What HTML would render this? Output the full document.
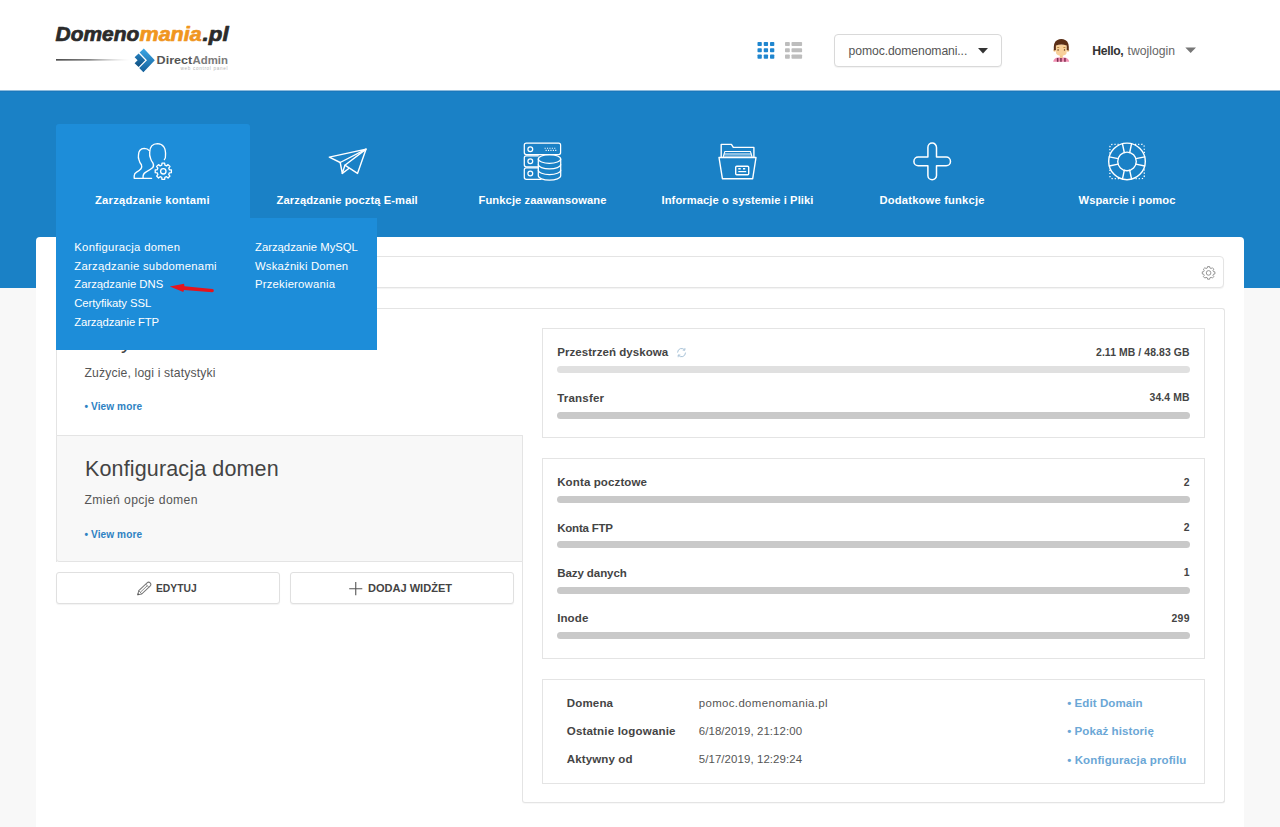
<!DOCTYPE html>
<html lang="pl"><head><meta charset="utf-8"><title>DirectAdmin</title>
<style>
html,body{margin:0;padding:0}
body{width:1280px;height:827px;position:relative;overflow:hidden;background:#f8f8f8;font-family:"Liberation Sans",sans-serif}
.a{position:absolute;box-sizing:border-box}
.t{position:absolute;white-space:pre;line-height:1;font-family:"Liberation Sans",sans-serif}
svg{position:absolute;overflow:visible}
.bar{position:absolute;left:557px;width:632.5px;height:7px;border-radius:4px;background:#c9c9c9}
.box{position:absolute;box-sizing:border-box;border:1px solid #e4e4e4;background:#fff}

</style></head>
<body>
<!-- header -->
<div class="a" style="left:0;top:0;width:1280px;height:90px;background:#fff"></div>
<!-- blue nav -->
<div class="a" style="left:0;top:90px;width:1280px;height:198px;background:#1a81c6"></div>
<div class="a" style="left:0;top:90px;width:1280px;height:1px;background:#8dbbdc"></div>
<div class="a" style="left:0;top:91px;width:1280px;height:1px;background:#1b78bc"></div>
<!-- main white panel -->
<div class="a" style="left:36px;top:237px;width:1208px;height:600px;background:#fff;border-radius:4px 4px 0 0"></div>
<!-- search box -->
<div class="box" style="left:56px;top:256px;width:1168px;height:32px;border-radius:4px;box-shadow:0 1px 1px rgba(0,0,0,.05)"></div>
<!-- outer container (top/left/right borders) -->
<div class="a" style="left:55.5px;top:307.5px;width:1169px;height:495px;border:1px solid #e4e4e4;border-bottom:none;border-radius:3px 3px 3px 0;background:#fff"></div>
<!-- white cover below left column so that left border stops at 562 -->
<div class="a" style="left:50px;top:562px;width:471.5px;height:245px;background:#fff"></div>
<!-- right container left+bottom border -->
<div class="a" style="left:521.5px;top:435px;width:703px;height:367.5px;border:1px solid #e4e4e4;border-top:none;border-radius:0 0 3px 3px;box-shadow:0 1px 1px rgba(0,0,0,.03)"></div>
<!-- gray widget -->
<div class="a" style="left:55.5px;top:434.5px;width:467px;height:127.5px;background:#f8f8f8;border:1px solid #e4e4e4;border-radius:0 0 0 3px"></div>
<div class="box" style="left:542px;top:328px;width:662.5px;height:110px"></div>
<div class="box" style="left:542px;top:458px;width:662.5px;height:200.5px"></div>
<div class="box" style="left:542px;top:678.5px;width:662.5px;height:105px"></div>
<!-- bars -->
<div class="bar" style="top:366.2px;background:#e0e0e0"></div>
<div class="bar" style="top:411.5px"></div>
<div class="bar" style="top:496px"></div>
<div class="bar" style="top:541.25px"></div>
<div class="bar" style="top:586.5px"></div>
<div class="bar" style="top:631.75px"></div>
<!-- buttons -->
<div class="box" style="left:55.5px;top:572.3px;width:224px;height:31.4px;border-radius:3px;border-color:#e0e0e0;box-shadow:0 1px 1px rgba(0,0,0,.05)"></div>
<div class="box" style="left:289.5px;top:572.3px;width:224.5px;height:31.4px;border-radius:3px;border-color:#e0e0e0;box-shadow:0 1px 1px rgba(0,0,0,.05)"></div>
<span class="t" style="left:84.50px;top:331.00px;font-size:21.53px;font-weight:400;color:#444;letter-spacing:0.224px;">Zużycie</span>
<!-- active tab + dropdown -->
<div class="a" style="left:55.5px;top:124px;width:194.5px;height:100px;background:#1d8dd9;border-radius:3px 3px 0 0"></div>
<div class="a" style="left:55.5px;top:218px;width:321.5px;height:132px;background:#1d8dd9"></div>
<!-- select -->
<div class="box" style="left:833.5px;top:34px;width:168.5px;height:33px;border-radius:4px;border-color:#d9d9d9;box-shadow:0 1px 1px rgba(0,0,0,.05)"></div>
<svg class="a" style="left:0;top:0" width="1280" height="827" viewBox="0 0 1280 827">
<!-- ===== logo ===== -->
<g font-family="Liberation Sans, sans-serif" font-weight="700" font-style="italic" font-size="19.4" stroke-width="0.7" stroke-linejoin="round">
<text x="55.6" y="40.7" textLength="83.6" lengthAdjust="spacingAndGlyphs" fill="#2b2b2b" stroke="#2b2b2b">Domeno</text>
<text x="139.6" y="40.7" textLength="62" lengthAdjust="spacingAndGlyphs" fill="#f0961f" stroke="#f0961f">mania</text>
<text x="202.6" y="40.7" textLength="26" lengthAdjust="spacingAndGlyphs" fill="#2b2b2b" stroke="#2b2b2b">.pl</text>
</g>
<defs>
<linearGradient id="lg1" x1="0" x2="1" y1="0" y2="0"><stop offset="0" stop-color="#3a3a3a"/><stop offset="0.45" stop-color="#777"/><stop offset="1" stop-color="#ccc" stop-opacity="0"/></linearGradient>
<linearGradient id="cg1" x1="0" x2="0" y1="0" y2="1"><stop offset="0" stop-color="#3ba7e6"/><stop offset="1" stop-color="#15609a"/></linearGradient>
<linearGradient id="cg2" x1="0" x2="0" y1="0" y2="1"><stop offset="0" stop-color="#2480bf"/><stop offset="1" stop-color="#0f4f80"/></linearGradient>
</defs>
<rect x="56" y="59.1" width="74" height="1.5" fill="url(#lg1)"/>
<!-- DA chevrons -->
<path d="M134.6 57.2 L138.6 53.4 L145.2 60.2 L138.6 67 L134.6 63.2 L137.6 60.2 Z" fill="url(#cg2)"/>
<path d="M139.6 52.6 L143.8 48.4 L154.8 60.2 L143.4 72.2 L139.2 68 L147 60.2 Z" fill="url(#cg1)"/>
<g font-family="Liberation Sans, sans-serif" font-weight="700" font-size="11.6">
<text x="156.6" y="64.4" textLength="35.6" lengthAdjust="spacingAndGlyphs" fill="#555">Direct</text>
<text x="192.6" y="64.4" textLength="35.4" lengthAdjust="spacingAndGlyphs" fill="#7a7a7a">Admin</text>
</g>
<text x="180.4" y="70.1" font-family="Liberation Sans, sans-serif" font-size="4.6" textLength="47.2" lengthAdjust="spacing" fill="#b5b5b5">web control panel</text>
<!-- grid icon -->
<g fill="#1f86cf">
<rect x="757.5" y="41.9" width="4.3" height="4.2" rx=".8"/><rect x="763.75" y="41.9" width="4.3" height="4.2" rx=".8"/><rect x="770" y="41.9" width="4.3" height="4.2" rx=".8"/>
<rect x="757.5" y="48.15" width="4.3" height="4.2" rx=".8"/><rect x="763.75" y="48.15" width="4.3" height="4.2" rx=".8"/><rect x="770" y="48.15" width="4.3" height="4.2" rx=".8"/>
<rect x="757.5" y="54.5" width="4.3" height="4.2" rx=".8"/><rect x="763.75" y="54.5" width="4.3" height="4.2" rx=".8"/><rect x="770" y="54.5" width="4.3" height="4.2" rx=".8"/>
</g>
<!-- list icon -->
<g fill="#bdbdbd">
<rect x="785" y="41.9" width="4.8" height="4.2" rx=".8"/><rect x="791.5" y="41.9" width="10.6" height="4.2" rx=".8"/>
<rect x="785" y="48.15" width="4.8" height="4.2" rx=".8"/><rect x="791.5" y="48.15" width="10.6" height="4.2" rx=".8"/>
<rect x="785" y="54.5" width="4.8" height="4.2" rx=".8"/><rect x="791.5" y="54.5" width="10.6" height="4.2" rx=".8"/>
</g>
<!-- select caret -->
<path d="M978 47.9 L988 47.9 L983 53.4 Z" fill="#333"/>
<!-- user caret -->
<path d="M1185.3 47.4 L1196 47.4 L1190.65 53 Z" fill="#777"/>
<!-- avatar -->
<g>
<path d="M1053.2 61.8 Q1053.6 58.2 1057.6 57.4 L1064.8 57.4 Q1068.8 58.2 1069.2 61.8 Z" fill="#f08db0"/>
<rect x="1056.9" y="58" width="1.5" height="3.8" fill="#7a3050"/><rect x="1060.2" y="58" width="1.5" height="3.8" fill="#7a3050"/><rect x="1064.2" y="58" width="1.5" height="3.8" fill="#7a3050"/>
<rect x="1059.8" y="54.5" width="3" height="3.4" fill="#f5c58c"/>
<ellipse cx="1054.6" cy="50.2" rx="1.2" ry="1.6" fill="#f3c98f"/><ellipse cx="1068" cy="50.2" rx="1.2" ry="1.6" fill="#f3c98f"/>
<path d="M1055.9 44.5 H1066.7 V52 Q1066.7 55.8 1061.3 55.8 Q1055.9 55.8 1055.9 52 Z" fill="#f8d09a"/>
<path d="M1053.9 50.5 Q1053.2 42 1057 40.2 Q1061.3 37.6 1065.6 40.2 Q1069.4 42 1068.7 50.5 L1066.7 50 L1066.7 45.4 Q1061.3 43.6 1055.9 45.4 L1055.9 50 Z" fill="#5b2f17"/>
<rect x="1057.2" y="47.2" width="2" height=".8" fill="#a9792f"/><rect x="1063.4" y="47.2" width="2" height=".8" fill="#a9792f"/>
<ellipse cx="1058.1" cy="49.9" rx=".7" ry=".9" fill="#7a5530"/><ellipse cx="1064.5" cy="49.9" rx=".7" ry=".9" fill="#7a5530"/>
</g>
<g stroke="#fff" fill="none" stroke-linecap="round" stroke-linejoin="round" stroke-width="1.35">
<path d="M149.3 150.6 Q147.6 148.3 144.2 148.3 Q138.6 148.6 138.5 155 Q138.1 157.6 138.9 159.6 Q139.6 162.6 141.4 164.8 Q142.3 167 141 168.8 Q139.5 170.6 136.6 172.2 Q134.3 173.6 134.2 175.8 L134.2 178.3 L151.6 178.3"/>
<path d="M164.4 159.6 Q165.7 158.4 165.5 155.4 Q166.2 144 157.4 143.7 Q149.9 143.8 149.7 152.4 Q149.3 155.6 150.6 158.6 Q151.5 161.4 152.8 162.8 Q154.3 165.6 152.8 167.6 Q150.6 169.6 146.6 171.6 Q143.3 173.2 143.1 175.9 L143.1 178.3"/>
<path d="M169.40 169.73 L171.39 169.95 L171.39 172.65 L169.40 172.87 L168.72 174.51 L169.97 176.07 L168.07 177.97 L166.51 176.72 L164.87 177.40 L164.65 179.39 L161.95 179.39 L161.73 177.40 L160.09 176.72 L158.53 177.97 L156.63 176.07 L157.88 174.51 L157.20 172.87 L155.21 172.65 L155.21 169.95 L157.20 169.73 L157.88 168.09 L156.63 166.53 L158.53 164.63 L160.09 165.88 L161.73 165.20 L161.95 163.21 L164.65 163.21 L164.87 165.20 L166.51 165.88 L168.07 164.63 L169.97 166.53 L168.72 168.09 Z" stroke-width="1.3"/>
<circle cx="163.3" cy="171.3" r="2.7" stroke-width="1.3"/>
</g>
<g stroke="#fff" fill="none" stroke-linecap="round" stroke-linejoin="round" stroke-width="1.4">
<path d="M366.1 149.1 L329.3 157.15 L340.2 162.5 Z"/>
<path d="M340.2 162.5 L342.3 173.4 L344.9 165.2"/>
<path d="M342.3 173.4 L348.8 168.5"/>
<path d="M366.1 149.1 L344.9 165.2 L357.5 173.4 Z"/>
</g>
<g stroke="#fff" fill="none" stroke-linecap="round" stroke-linejoin="round" stroke-width="1.25">
<rect x="524.3" y="143.2" width="36.3" height="11.4" rx="2"/>
<circle cx="530.3" cy="149.3" r="2.4"/>
<path d="M544.6 148.3 H556.6 M545.6 150.4 H557.4" stroke-dasharray="1.1 1.3" stroke-linecap="butt" stroke-width="1.1"/>
<path d="M538.3 155.8 H526.3 Q524.3 155.8 524.3 157.8 V164.8 Q524.3 166.8 526.3 166.8 H538.3"/>
<circle cx="530.3" cy="161.3" r="2.4"/>
<path d="M538.3 167.8 H526.3 Q524.3 167.8 524.3 169.8 V177.3 Q524.3 179.3 526.3 179.3 H541"/>
<circle cx="530.3" cy="173.4" r="2.4"/>
<ellipse cx="549.5" cy="159" rx="11.2" ry="4.3"/>
<path d="M538.3 159 V175.8 A11.2 4.3 0 0 0 560.7 175.8 V159"/>
<path d="M538.3 164.6 A11.2 4.3 0 0 0 560.7 164.6"/>
<path d="M538.3 170.2 A11.2 4.3 0 0 0 560.7 170.2"/>
</g>
<g stroke="#fff" fill="none" stroke-linecap="round" stroke-linejoin="round" stroke-width="1.4" stroke-linejoin="miter">
<path d="M721.2 157.2 V144.4 H731.4 L733.3 147.4 H753.9 V157.2"/>
<path d="M723.2 157 L724.9 151.4 H750.4 L752.1 157" stroke-width="1.05"/>
<path d="M724.2 153.9 H751.1" stroke-width="1.05"/><path d="M723.6 156.1 H751.7" stroke-width=".7"/>
<path d="M719 157.5 H756 L752.7 178.7 H722.4 Z"/>
<rect x="735.7" y="166.2" width="13" height="8.6" rx="1"/>
<path d="M738.3 168.7 H740.7 M743 168.7 H745.2" stroke-width="1.5" stroke-linecap="butt"/>
<path d="M738.3 171.6 H746.2" stroke-width="1.2" stroke-linecap="butt"/>
</g>
<path d="M927.9000000000001 157.1 V147.4 A4.3 4.3 0 0 1 936.5 147.4 V157.1 H946.2 A4.3 4.3 0 0 1 946.2 165.70000000000002 H936.5 V175.4 A4.3 4.3 0 0 1 927.9000000000001 175.4 V165.70000000000002 H918.2 A4.3 4.3 0 0 1 918.2 157.1 Z" stroke="#fff" fill="none" stroke-linecap="round" stroke-linejoin="round" stroke-width="1.5"/>
<g stroke="#fff" fill="none" stroke-linecap="round" stroke-linejoin="round" stroke-width="1.4">
<path d="M1109.9 153.4 V147.2 Q1109.9 144.3 1112.9 144.3 H1119 M1135 144.3 H1141.3 Q1144.3 144.3 1144.3 147.2 V153.4 M1144.3 169.4 V175.6 Q1144.3 178.6 1141.3 178.6 H1135 M1119 178.6 H1112.9 Q1109.9 178.6 1109.9 175.6 V169.4" stroke-dasharray="1.2 1.9" stroke-width="1.3" stroke-linecap="butt"/>
<circle cx="1127.0" cy="161.4" r="18.3"/><circle cx="1127.0" cy="161.4" r="9.3"/>
<path d="M1124.28 152.51 L1122.42 143.68"/>
<path d="M1129.72 152.51 L1131.58 143.68"/>
<path d="M1135.89 158.68 L1144.72 156.82"/>
<path d="M1135.89 164.12 L1144.72 165.98"/>
<path d="M1129.72 170.29 L1131.58 179.12"/>
<path d="M1124.28 170.29 L1122.42 179.12"/>
<path d="M1118.11 164.12 L1109.28 165.98"/>
<path d="M1118.11 158.68 L1109.28 156.82"/>
</g>
<path d="M1213.54 271.63 L1214.91 271.85 L1214.91 273.95 L1213.54 274.17 L1212.99 275.50 L1213.81 276.62 L1212.32 278.11 L1211.20 277.29 L1209.87 277.84 L1209.65 279.21 L1207.55 279.21 L1207.33 277.84 L1206.00 277.29 L1204.88 278.11 L1203.39 276.62 L1204.21 275.50 L1203.66 274.17 L1202.29 273.95 L1202.29 271.85 L1203.66 271.63 L1204.21 270.30 L1203.39 269.18 L1204.88 267.69 L1206.00 268.51 L1207.33 267.96 L1207.55 266.59 L1209.65 266.59 L1209.87 267.96 L1211.20 268.51 L1212.32 267.69 L1213.81 269.18 L1212.99 270.30 Z" stroke="#8a8a8a" fill="none" stroke-width="0.9" stroke-linejoin="round"/>
<circle cx="1208.6" cy="272.9" r="2.3" stroke="#8a8a8a" fill="none" stroke-width="0.9"/><!-- refresh icon -->
<g stroke="#a9c3d8" fill="none" stroke-width="1" stroke-linecap="round">
<path d="M677.6 352.2 A4 4 0 0 1 684.6 349.8"/><path d="M685.5 353 A4 4 0 0 1 678.5 355.4"/>
<path d="M684.9 348.4 V350.2 H683.1" stroke-width=".9"/><path d="M678.2 356.8 V355 H680" stroke-width=".9"/>
</g>
<!-- pencil -->
<g transform="translate(137.7 594.8) rotate(-43.5)" stroke="#777" fill="none" stroke-width="1" stroke-linejoin="round">
<path d="M0 0 L3.6 -2.2 H15 A2.2 2.2 0 0 1 15 2.2 H3.6 Z"/>
<path d="M3.6 -2.2 V2.2 M13.2 -2.2 V2.2 M3.6 0 H13.2" stroke-width=".8"/>
<path d="M0 0 L1.2 -.7 V.7 Z" fill="#555" stroke="#555" stroke-width=".5"/>
</g>
<!-- plus -->
<path d="M349.2 588.7 H362.3 M355.75 582.1 V595.3" stroke="#555" stroke-width="1.1" fill="none"/>
<!-- red arrow -->
<path d="M169.8 286.6 L184.1 283.7 L184.4 286.3 L212.4 289.1 A1.55 1.55 0 0 1 212.2 292.2 L184 290.1 L183.3 292.1 Z" fill="#e5141d"/>

</svg>

<!-- text layer -->
<span class="t" style="left:848.60px;top:45.00px;font-size:12.2px;font-weight:400;color:#555;letter-spacing:-0.106px;">pomoc.domenomani...</span>
<span class="t" style="left:1092.30px;top:45.00px;font-size:12.2px;font-weight:700;color:#333;letter-spacing:-0.357px;">Hello,</span>
<span class="t" style="left:1127.50px;top:45.00px;font-size:12.2px;font-weight:400;color:#666;letter-spacing:0.008px;">twojlogin</span>
<span class="t" style="left:95.00px;top:195.00px;font-size:11.18px;font-weight:700;color:#fff;letter-spacing:0.259px;">Zarządzanie kontami</span>
<span class="t" style="left:276.60px;top:195.00px;font-size:11.18px;font-weight:700;color:#fff;letter-spacing:0.086px;">Zarządzanie pocztą E-mail</span>
<span class="t" style="left:478.50px;top:195.00px;font-size:11.18px;font-weight:700;color:#fff;letter-spacing:0.1px;">Funkcje zaawansowane</span>
<span class="t" style="left:661.50px;top:195.00px;font-size:11.18px;font-weight:700;color:#fff;letter-spacing:0.081px;">Informacje o systemie i Pliki</span>
<span class="t" style="left:879.50px;top:195.00px;font-size:11.18px;font-weight:700;color:#fff;letter-spacing:0.196px;">Dodatkowe funkcje</span>
<span class="t" style="left:1078.50px;top:195.00px;font-size:11.18px;font-weight:700;color:#fff;letter-spacing:0.089px;">Wsparcie i pomoc</span>
<span class="t" style="left:74.25px;top:242.00px;font-size:11.31px;font-weight:400;color:#fff;letter-spacing:0.305px;">Konfiguracja domen</span>
<span class="t" style="left:74.25px;top:261.00px;font-size:11.31px;font-weight:400;color:#fff;letter-spacing:0.278px;">Zarządzanie subdomenami</span>
<span class="t" style="left:74.25px;top:279.00px;font-size:11.31px;font-weight:400;color:#fff;letter-spacing:-0.017px;">Zarządzanie DNS</span>
<span class="t" style="left:74.25px;top:298.00px;font-size:11.31px;font-weight:400;color:#fff;letter-spacing:-0.066px;">Certyfikaty SSL</span>
<span class="t" style="left:74.25px;top:317.00px;font-size:11.31px;font-weight:400;color:#fff;letter-spacing:-0.124px;">Zarządzanie FTP</span>
<span class="t" style="left:255.00px;top:242.00px;font-size:11.31px;font-weight:400;color:#fff;letter-spacing:-0.004px;">Zarządzanie MySQL</span>
<span class="t" style="left:255.00px;top:261.00px;font-size:11.31px;font-weight:400;color:#fff;letter-spacing:0.197px;">Wskaźniki Domen</span>
<span class="t" style="left:255.00px;top:279.00px;font-size:11.31px;font-weight:400;color:#fff;letter-spacing:0.207px;">Przekierowania</span>
<span class="t" style="left:84.50px;top:367.00px;font-size:12.2px;font-weight:400;color:#555;letter-spacing:0.146px;">Zużycie, logi i statystyki</span>
<span class="t" style="left:84.50px;top:402.00px;font-size:10.1px;font-weight:700;color:#2e82c3;letter-spacing:0.087px;">• View more</span>
<span class="t" style="left:85.00px;top:459.00px;font-size:21.53px;font-weight:400;color:#444;letter-spacing:0.135px;">Konfiguracja domen</span>
<span class="t" style="left:84.50px;top:494.00px;font-size:12.2px;font-weight:400;color:#555;letter-spacing:0.372px;">Zmień opcje domen</span>
<span class="t" style="left:84.50px;top:530.00px;font-size:10.1px;font-weight:700;color:#2e82c3;letter-spacing:0.087px;">• View more</span>
<span class="t" style="left:155.60px;top:582.00px;font-size:11.6px;font-weight:700;color:#444;letter-spacing:0px;transform:scaleX(0.8885);transform-origin:0 0;">EDYTUJ</span>
<span class="t" style="left:368.00px;top:582.00px;font-size:11.6px;font-weight:700;color:#444;letter-spacing:0px;transform:scaleX(0.9518);transform-origin:0 0;">DODAJ WIDŻET</span>
<span class="t" style="left:557.20px;top:347.00px;font-size:11.54px;font-weight:700;color:#444;letter-spacing:0.049px;">Przestrzeń dyskowa</span>
<span class="t" style="left:1096.00px;top:348.00px;font-size:10.41px;font-weight:700;color:#444;letter-spacing:0.09px;">2.11 MB / 48.83 GB</span>
<span class="t" style="left:557.20px;top:393.00px;font-size:11.54px;font-weight:700;color:#444;letter-spacing:0.185px;">Transfer</span>
<span class="t" style="left:1149.60px;top:393.00px;font-size:10.41px;font-weight:700;color:#444;letter-spacing:0.094px;">34.4 MB</span>
<span class="t" style="left:557.20px;top:477.00px;font-size:11.54px;font-weight:700;color:#444;letter-spacing:0.109px;">Konta pocztowe</span>
<span class="t" style="left:1183.70px;top:478.00px;font-size:10.41px;font-weight:700;color:#444;letter-spacing:0px;">2</span>
<span class="t" style="left:557.20px;top:523.00px;font-size:11.54px;font-weight:700;color:#444;letter-spacing:-0.23px;">Konta FTP</span>
<span class="t" style="left:1183.70px;top:523.00px;font-size:10.41px;font-weight:700;color:#444;letter-spacing:0px;">2</span>
<span class="t" style="left:557.20px;top:568.00px;font-size:11.54px;font-weight:700;color:#444;letter-spacing:-0.088px;">Bazy danych</span>
<span class="t" style="left:1183.70px;top:568.00px;font-size:10.41px;font-weight:700;color:#444;letter-spacing:0px;">1</span>
<span class="t" style="left:557.20px;top:613.00px;font-size:11.54px;font-weight:700;color:#444;letter-spacing:0.09px;">Inode</span>
<span class="t" style="left:1171.50px;top:614.00px;font-size:10.41px;font-weight:700;color:#444;letter-spacing:0.317px;">299</span>
<span class="t" style="left:566.75px;top:698.00px;font-size:11.54px;font-weight:700;color:#444;letter-spacing:0.152px;">Domena</span>
<span class="t" style="left:698.75px;top:698.00px;font-size:11.44px;font-weight:400;color:#555;letter-spacing:0.357px;">pomoc.domenomania.pl</span>
<span class="t" style="left:1067.20px;top:698.00px;font-size:11.54px;font-weight:700;color:#6ba7d6;letter-spacing:0.076px;">• Edit Domain</span>
<span class="t" style="left:566.75px;top:726.00px;font-size:11.54px;font-weight:700;color:#444;letter-spacing:0.179px;">Ostatnie logowanie</span>
<span class="t" style="left:698.75px;top:726.00px;font-size:11.44px;font-weight:400;color:#555;letter-spacing:0.087px;">6/18/2019, 21:12:00</span>
<span class="t" style="left:1067.20px;top:726.00px;font-size:11.54px;font-weight:700;color:#6ba7d6;letter-spacing:0.079px;">• Pokaż historię</span>
<span class="t" style="left:566.75px;top:754.00px;font-size:11.54px;font-weight:700;color:#444;letter-spacing:0.116px;">Aktywny od</span>
<span class="t" style="left:698.75px;top:754.00px;font-size:11.44px;font-weight:400;color:#555;letter-spacing:0.087px;">5/17/2019, 12:29:24</span>
<span class="t" style="left:1067.20px;top:755.00px;font-size:11.54px;font-weight:700;color:#6ba7d6;letter-spacing:0.109px;">• Konfiguracja profilu</span>
</body></html>
